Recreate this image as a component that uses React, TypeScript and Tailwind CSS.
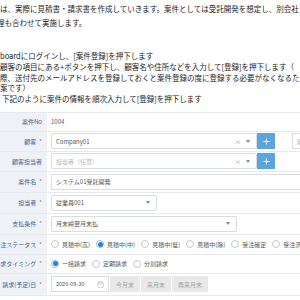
import React from 'react'
import { Calendar, Plus } from 'lucide-react'

const Caret = () => (
  <span className="h-0 w-0 border-x-[2.5px] border-t-[3px] border-x-transparent border-t-[#888]" />
)

const Row = ({
  label,
  required,
  h,
  children,
}: {
  label: string
  required?: boolean
  h: string
  children?: React.ReactNode
}) => (
  <div className={`flex border-b border-[#e6e9ed] ${h}`}>
    <div className="flex w-[47px] shrink-0 items-center justify-end overflow-hidden whitespace-nowrap bg-[#eef2f6] pr-[5px] text-[6px] text-[#3f6593]">
      <span>{label}</span>
      {required && <span className="ml-[3px] text-[#e05a5a]">*</span>}
    </div>
    <div className="flex min-w-0 flex-1 items-center pl-[4px]">{children}</div>
  </div>
)

const Radio = ({ checked, label }: { checked?: boolean; label: string }) => (
  <div className="flex items-center gap-[3px] whitespace-nowrap">
    <span
      className={`flex h-[8px] w-[8px] items-center justify-center rounded-full border ${
        checked ? 'border-[#8dbbe8] bg-white' : 'border-[#c9c9c9] bg-white'
      }`}
    >
      {checked && <span className="h-[5px] w-[5px] rounded-full bg-[#2f7fd0]" />}
    </span>
    <span>{label}</span>
  </div>
)

const SelectBox = ({
  w,
  text,
  placeholder,
  clear,
}: {
  w: string
  text?: string
  placeholder?: string
  clear?: boolean
}) => (
  <div
    className={`flex h-[16px] shrink-0 items-center rounded-[2px] border border-[#d9dce0] bg-white pl-[4px] pr-[6px] ${w}`}
  >
    <span className={`flex-1 whitespace-nowrap ${text ? 'text-[#555]' : 'text-[#b5b5b5]'}`}>
      {text || placeholder}
    </span>
    {clear && <span className="mr-[5px] text-[6px] text-[#999]">×</span>}
    <Caret />
  </div>
)

const AddButton = () => (
  <div className="flex h-[16px] w-[18px] shrink-0 items-center justify-center bg-[#5aa5dc]">
    <Plus size={9} strokeWidth={2.5} color="#fff" />
  </div>
)

export default function App() {
  return (
    <div className="h-[300px] w-[300px] overflow-hidden bg-white font-['Noto_Sans_CJK_JP','Noto_Sans',sans-serif] text-[#222]">
      {/* intro text */}
      <div className="whitespace-nowrap pt-[2px] text-[7.5px] leading-[13.5px]">
        <div>は、実際に見積書・請求書を作成していきます。案件としては受託開発を想定し、別会社</div>
        <div className="ml-[-3px]">理も合わせて実施します。</div>
      </div>
      <div className="mt-[22px] whitespace-nowrap text-[7.5px] leading-[10.8px]">
        <div>boardにログインし、[案件登録]を押下します</div>
        <div>顧客の項目にある+ボタンを押下し、顧客名や住所などを入力して[登録]を押下します（</div>
        <div>際、送付先のメールアドレスを登録しておくと案件登録の度に登録する必要がなくなるた</div>
        <div>案です）</div>
        <div className="pl-[2px]">下記のように案件の情報を順次入力して[登録]を押下します</div>
      </div>

      {/* form */}
      <div className="mt-[7px] border-t border-[#e6e9ed] text-[6px] text-[#555]">
        <Row label="案件No" h="h-[19px]">
          <span>1004</span>
        </Row>
        <Row label="顧客" required h="h-[20px]">
          <SelectBox w="w-[206px]" text="Company01" clear />
          <AddButton />
          <div className="ml-[17px] flex h-[16px] w-[40px] shrink-0 items-center border border-[#d9dce0] pl-[4px] text-[#c0c0c0]">
            顧客
          </div>
        </Row>
        <Row label="顧客担当者" h="h-[20px]">
          <SelectBox w="w-[206px]" placeholder="担当者（任意）" clear />
          <AddButton />
        </Row>
        <Row label="案件名" required h="h-[21px]">
          <div className="flex h-[16px] w-[260px] shrink-0 items-center border border-[#d9dce0] pl-[4px]">
            システム01受託開発
          </div>
        </Row>
        <Row label="担当者" required h="h-[21px]">
          <SelectBox w="w-[106px]" text="従業員001" />
        </Row>
        <Row label="支払条件" required h="h-[21px]">
          <SelectBox w="w-[186px]" text="月末締翌月末払" />
        </Row>
        <Row label="受注ステータス" required h="h-[20px]">
          <div className="flex items-center gap-[6px]">
            <Radio label="見積中(高)" />
            <Radio label="見積中(中)" checked />
            <Radio label="見積中(低)" />
            <Radio label="見積中(除)" />
            <Radio label="受注確定" />
            <Radio label="受注済" />
          </div>
        </Row>
        <Row label="請求タイミング" required h="h-[19px]">
          <div className="flex items-center gap-[6px]">
            <Radio label="一括請求" checked />
            <Radio label="定期請求" />
            <Radio label="分割請求" />
          </div>
        </Row>
        <Row label="請求(予定)日" required h="h-[22px]">
          <div className="flex h-[16px] w-[58px] shrink-0 items-center justify-between border border-[#d9dce0] pl-[4px] pr-[4px]">
            <span className="text-[5.5px]">2020-09-30</span>
            <Calendar size={7} color="#aaa" strokeWidth={1.5} />
          </div>
          <div className="ml-[1px] flex gap-[1px] text-[#a3a3a3]">
            <div className="flex h-[16px] items-center bg-[#e9e9e9] px-[6px]">今月末</div>
            <div className="flex h-[16px] items-center bg-[#e9e9e9] px-[6px]">来月末</div>
            <div className="flex h-[16px] items-center bg-[#e9e9e9] px-[6px]">再来月末</div>
          </div>
        </Row>
      </div>
    </div>
  )
}
